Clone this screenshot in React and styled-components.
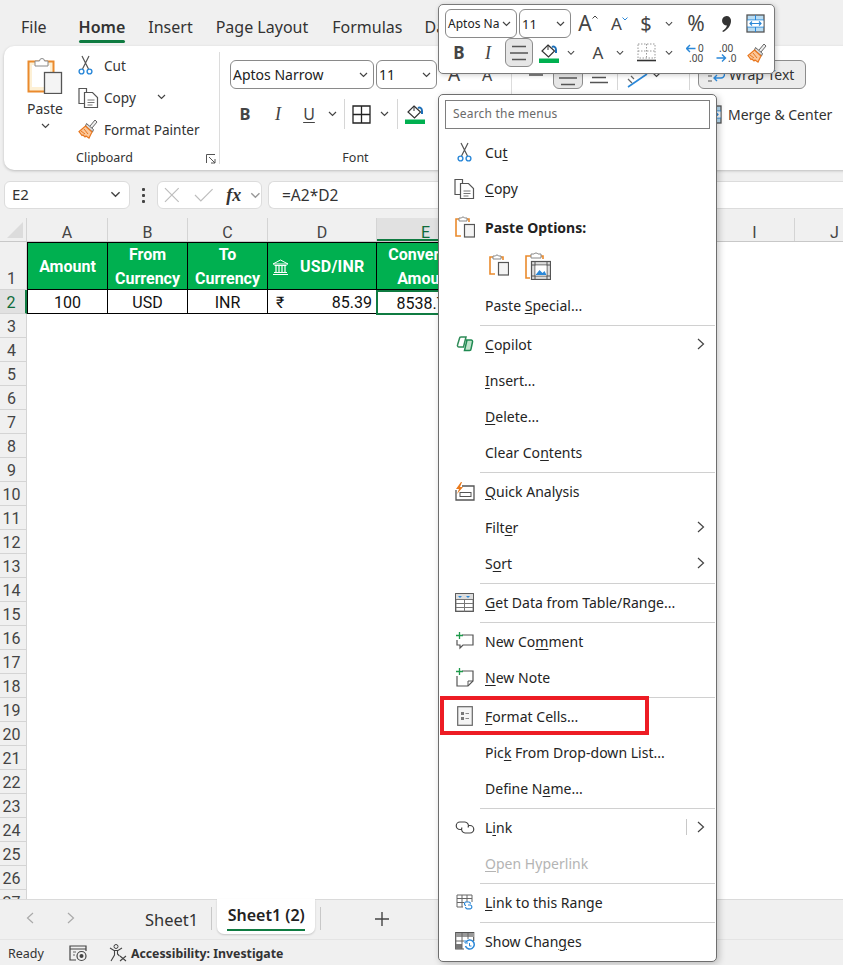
import React from "react";
import styled, { createGlobalStyle } from "styled-components";

const UI = `"Noto Sans", "Open Sans", sans-serif`;
const CELL = `Roboto, "Liberation Sans", sans-serif`;

const GlobalStyle = createGlobalStyle`
  html, body { margin: 0; padding: 0; background: #f0f0f0; }
  body { font-family: ${UI}; color: #242424; }
  u { text-underline-offset: 2px; text-decoration-thickness: 1px; }
`;

const Page = styled.div`
  position: relative;
  width: 843px;
  height: 965px;
  overflow: hidden;
  display: flex;
  flex-direction: column;
  background: #f0f0f0;
`;

/* ---------- tabs ---------- */
const TabBar = styled.div`
  height: 46px;
  flex: none;
  display: flex;
  padding-left: 21px;
  box-sizing: border-box;
`;
const Tab = styled.div`
  position: relative;
  margin-left: ${(p) => p.$ml}px;
  padding-top: 16px;
  font-size: 16px;
  line-height: 22px;
  font-weight: ${(p) => (p.$active ? 600 : 400)};
  color: #333;
  &::after {
    content: "";
    display: ${(p) => (p.$active ? "block" : "none")};
    position: absolute;
    left: 0;
    right: 0;
    top: 40px;
    height: 2.5px;
    border-radius: 2px;
    background: #0f7b41;
  }
`;

/* ---------- ribbon ---------- */
const Ribbon = styled.div`
  height: 124px;
  flex: none;
  width: 900px;
  margin-left: 4px;
  display: flex;
  background: #fff;
  border-radius: 10px;
  box-shadow: 0 1px 3px rgba(0, 0, 0, 0.22);
`;
const RibbonGroup = styled.div`
  position: relative;
  flex: none;
  width: ${(p) => p.$w}px;
  height: 112px;
  margin-top: 6px;
  box-sizing: border-box;
  border-right: ${(p) => (p.$last ? "none" : "1px solid #dcdcdc")};
`;
const GroupBody = styled.div`
  display: flex;
  gap: ${(p) => p.$gap || 0}px;
  padding: ${(p) => p.$pad || "0"};
`;
const GroupLabel = styled.div`
  position: absolute;
  left: 0;
  right: ${(p) => p.$pr}px;
  top: 97px;
  text-align: center;
  font-size: 12.5px;
  line-height: 18px;
  color: #333;
`;
const Launcher = styled.svg`
  position: absolute;
  right: 3px;
  bottom: 0;
`;
const PasteColumn = styled.div`
  width: 40px;
  display: flex;
  flex-direction: column;
  align-items: center;
  font-size: 14px;
  line-height: 18px;
  color: #333;
`;
const PasteLabel = styled.div`
  margin-top: 6px;
`;
const PasteChevron = styled.div`
  margin-top: 5px;
  line-height: 0;
`;
const ClipboardList = styled.div`
  display: flex;
  flex-direction: column;
  margin-top: -1px;
  gap: 12px;
`;
const ClipboardRow = styled.div`
  height: 20px;
  display: flex;
  align-items: center;
  font-size: 13.6px;
  color: #333;
  white-space: nowrap;
`;
const ClipIconSlot = styled.div`
  width: 26px;
  display: flex;
  justify-content: flex-start;
  line-height: 0;
`;
const RibbonRow = styled.div`
  display: flex;
  align-items: center;
  height: ${(p) => p.$h}px;
  margin-top: ${(p) => p.$mt || 0}px;
  margin-left: ${(p) => p.$ml || 0}px;
`;
const Combo = styled.div`
  flex: none;
  width: ${(p) => p.$w}px;
  height: 29px;
  margin-left: ${(p) => p.$ml || 0}px;
  box-sizing: border-box;
  border: 1px solid #8a8a8a;
  border-radius: 6px;
  background: #fff;
  display: flex;
  align-items: center;
  justify-content: space-between;
  padding: 0 5px 0 2px;
  font-family: ${UI};
  font-size: ${(p) => p.$size || 14}px;
  color: #222;
  overflow: hidden;
  white-space: nowrap;
`;
const Tool = styled.div`
  flex: none;
  width: ${(p) => p.$w}px;
  margin-left: ${(p) => p.$ml || 0}px;
  padding-top: ${(p) => p.$pt || 0}px;
  display: flex;
  align-items: center;
  justify-content: center;
  line-height: 1;
  color: #444;
  font-family: ${(p) => (p.$serif ? `"Liberation Serif", serif` : UI)};
  font-size: ${(p) => p.$size || 14}px;
  font-weight: ${(p) => (p.$bold ? 700 : 400)};
  font-style: ${(p) => (p.$italic ? "italic" : "normal")};
`;
const ActiveTool = styled.div`
  flex: none;
  width: ${(p) => p.$w}px;
  height: 29px;
  margin-left: ${(p) => p.$ml || 0}px;
  padding-top: ${(p) => p.$pt || 0}px;
  box-sizing: border-box;
  border: 1px solid #8c8c8c;
  border-radius: 6px;
  background: #e6e6e6;
  display: flex;
  align-items: center;
  justify-content: center;
`;
const Divider = styled.div`
  flex: none;
  width: 1px;
  height: 30px;
  margin-left: ${(p) => p.$ml || 0}px;
  background: #d6d6d6;
`;
const WrapButton = styled.div`
  flex: none;
  width: 108px;
  height: 29px;
  margin-left: 8px;
  box-sizing: border-box;
  border: 1px solid #8c8c8c;
  border-radius: 6px;
  background: #ececec;
  display: flex;
  align-items: center;
  gap: 4px;
  padding-left: 8px;
  font-size: 14px;
  color: #333;
`;
const MergeLabel = styled.div`
  font-size: 14px;
  color: #333;
  margin-left: 6px;
  white-space: nowrap;
`;

/* ---------- formula bar ---------- */
const FormulaBar = styled.div`
  height: 48px;
  flex: none;
  box-sizing: border-box;
  padding: 11px 0 9px 4px;
  display: flex;
  align-items: stretch;
`;
const NameBox = styled.div`
  width: 126px;
  box-sizing: border-box;
  background: #fff;
  border: 1px solid #dcdcdc;
  border-radius: 6px;
  display: flex;
  align-items: center;
  justify-content: space-between;
  padding: 0 8px 2px 7px;
  font-size: 15px;
  color: #333;
`;
const Dots = styled.div`
  width: 27px;
  display: flex;
  flex-direction: column;
  align-items: center;
  justify-content: center;
  gap: 3px;
  & > i {
    width: 3px;
    height: 3px;
    background: #444;
    border-radius: 1px;
  }
`;
const FxBox = styled.div`
  width: 105px;
  box-sizing: border-box;
  background: #fff;
  border: 1px solid #dcdcdc;
  border-radius: 6px;
  display: flex;
  align-items: center;
  padding-left: 6px;
  gap: 14px;
`;
const FxGlyph = styled.span`
  font-family: "Liberation Serif", serif;
  font-style: italic;
  font-weight: 700;
  font-size: 18px;
  color: #333;
  margin-left: -1px;
  margin-right: -5px;
`;
const FormulaInput = styled.div`
  flex: 1;
  margin-left: 6px;
  background: #fff;
  border: 1px solid #dcdcdc;
  border-right: none;
  border-radius: 6px 0 0 6px;
  display: flex;
  align-items: center;
  padding: 0 0 1px 13px;
  font-size: 15.5px;
  color: #333;
`;

/* ---------- sheet ---------- */
const ColumnHeaders = styled.div`
  height: 23px;
  flex: none;
  display: flex;
  background: #f0f0f0;
  border-bottom: 1px solid #c8c8c8;
  box-sizing: content-box;
`;
const Corner = styled.div`
  width: 27px;
  flex: none;
  position: relative;
  box-sizing: border-box;
  border-right: 1px solid #d4d4d4;
  &::after {
    content: "";
    position: absolute;
    right: 3px;
    bottom: 3px;
    border-style: solid;
    border-width: 0 0 16px 16px;
    border-color: transparent transparent #dcdcdc transparent;
  }
`;
const ColumnHead = styled.div`
  flex: none;
  width: ${(p) => p.$w}px;
  box-sizing: border-box;
  border-right: 1px solid #d4d4d4;
  background: ${(p) => (p.$sel ? "#e1e1e1" : "transparent")};
  box-shadow: ${(p) => (p.$sel ? "inset 0 -2px 0 #0f7b41" : "none")};
  text-align: center;
  font-family: ${CELL};
  font-size: 16px;
  line-height: 29px;
  color: ${(p) => (p.$sel ? "#0f6b3a" : "#444")};
`;
const SheetBody = styled.div`
  flex: 1;
  min-height: 0;
  overflow: hidden;
  background: #fff;
`;
const SheetRow = styled.div`
  display: flex;
  height: ${(p) => p.$h}px;
`;
const RowHead = styled.div`
  flex: none;
  width: 27px;
  box-sizing: border-box;
  padding-right: 3px;
  display: flex;
  align-items: flex-end;
  justify-content: center;
  font-family: ${CELL};
  font-size: 16px;
  line-height: 21px;
  background: ${(p) => (p.$sel ? "#e1e1e1" : "#f0f0f0")};
  color: ${(p) => (p.$sel ? "#0f6b3a" : "#444")};
  border-bottom: 1px solid #d4d4d4;
  border-right: ${(p) => (p.$sel ? "2px solid #0f7b41" : "1px solid #d4d4d4")};
`;
const HeadCell = styled.div`
  flex: none;
  width: ${(p) => p.$w}px;
  box-sizing: border-box;
  background: #00b050;
  color: #fff;
  border: 1px solid #000;
  border-left-width: ${(p) => (p.$first ? 1 : 0)}px;
  display: flex;
  align-items: center;
  justify-content: ${(p) => (p.$spread ? "flex-start" : "center")};
  text-align: center;
  font-family: ${CELL};
  font-weight: 700;
  font-size: 16px;
  line-height: 24px;
  padding: 2px 0 0 ${(p) => (p.$spread ? 4 : 0)}px;
  white-space: pre-line;
`;
const DeskLabel = styled.span`
  margin-left: 11px;
  letter-spacing: 0.2px;
`;
const DataCell = styled.div`
  flex: none;
  width: ${(p) => p.$w}px;
  box-sizing: border-box;
  background: #fff;
  border-right: 1px solid #000;
  border-bottom: 1px solid #000;
  border-left: ${(p) => (p.$first ? "1px solid #000" : "none")};
  display: flex;
  align-items: center;
  justify-content: ${(p) => (p.$between ? "space-between" : "center")};
  padding: ${(p) => (p.$between ? "1px 4px 0 8px" : "1px 0 0")};
  font-family: ${CELL};
  font-size: 16px;
  color: #111;
`;
const SelectedCell = styled(DataCell)`
  border: 2px solid #0f7b41;
  position: relative;
  left: -1px;
  height: 25px;
  width: ${(p) => p.$w + 1}px;
`;

/* ---------- sheet tabs and status ---------- */
const SheetTabs = styled.div`
  height: 40px;
  flex: none;
  box-sizing: border-box;
  display: flex;
  align-items: flex-start;
  background: #f0f0f0;
  border-top: 1px solid #dadada;
`;
const NavArrow = styled.div`
  margin-left: ${(p) => p.$ml}px;
  margin-top: 12px;
  line-height: 0;
`;
const SheetName = styled.div`
  margin-left: 70px;
  padding-top: 8px;
  font-size: 16.5px;
  line-height: 24px;
  color: #333;
`;
const TabDivider = styled.div`
  width: 1px;
  height: 23px;
  margin: 7px 0 0 ${(p) => p.$ml}px;
  background: #c8c8c8;
`;
const ActiveSheet = styled.div`
  position: relative;
  width: 98px;
  height: 35px;
  margin: -1px 0 0 5px;
  box-sizing: border-box;
  padding-top: 4px;
  text-align: center;
  background: #fff;
  border-radius: 0 0 7px 7px;
  box-shadow: 0 1px 2px rgba(0, 0, 0, 0.18);
  font-size: 16px;
  font-weight: 600;
  line-height: 24px;
  color: #222;
  &::after {
    content: "";
    position: absolute;
    left: 10px;
    right: 10px;
    bottom: 3px;
    height: 2px;
    background: #0f7b41;
  }
`;
const AddSheet = styled.div`
  margin: 12px 0 0 54px;
  line-height: 0;
`;
const StatusBar = styled.div`
  height: 26px;
  flex: none;
  box-sizing: border-box;
  display: flex;
  align-items: center;
  padding: 1px 0 0 8px;
  background: #f0f0f0;
  border-top: 1px solid #e4e4e4;
  font-size: 12.5px;
  color: #333;
`;
const StatusIcon = styled.div`
  margin-left: ${(p) => p.$ml}px;
  line-height: 0;
`;
const StatusStrong = styled.span`
  margin-left: 3px;
  font-weight: 700;
  font-size: 12.3px;
`;

/* ---------- floating toolbar ---------- */
const MiniToolbar = styled.div`
  position: absolute;
  left: 438px;
  top: 4px;
  width: 337px;
  height: 70px;
  box-sizing: border-box;
  padding: 4px 0 0 6px;
  background: #fff;
  border: 1px solid #7a7a7a;
  border-radius: 5px;
  box-shadow: 1px 1px 5px rgba(0, 0, 0, 0.2);
`;
const MiniRow = styled.div`
  display: flex;
  align-items: center;
  height: 29px;
`;
const GrowCaret = styled.span`
  position: relative;
  display: inline-block;
  line-height: 1;
  margin-right: ${(p) => p.$mr || 0}px;
`;
const CaretMark = styled.svg`
  position: absolute;
  right: -6px;
  top: 2px;
`;

/* ---------- context menu ---------- */
const Menu = styled.div`
  position: absolute;
  left: 438px;
  top: 94px;
  width: 279px;
  height: 868px;
  box-sizing: border-box;
  background: #fff;
  border: 1px solid #6e6e6e;
  border-radius: 5px;
  box-shadow: 2px 2px 7px rgba(0, 0, 0, 0.22);
`;
const SearchBox = styled.div`
  height: 29px;
  margin: 5px 6px 6px 6px;
  box-sizing: border-box;
  border: 1px solid #7e7e7e;
  padding: 0 0 2px 7px;
  display: flex;
  align-items: center;
  font-size: 12px;
  letter-spacing: 0.2px;
  color: #6a6a6a;
`;
const MenuRow = styled.div`
  position: relative;
  height: 36px;
  box-sizing: border-box;
  padding-bottom: 2px;
  display: flex;
  align-items: center;
  font-size: 14px;
  letter-spacing: 0.02px;
  color: ${(p) => (p.$disabled ? "#b4b4b4" : "#242424")};
`;
const MenuIconSlot = styled.div`
  flex: none;
  width: 46px;
  box-sizing: border-box;
  padding-left: 5px;
  display: flex;
  justify-content: center;
  line-height: 0;
`;
const MenuArrow = styled.div`
  margin-left: auto;
  margin-right: 11px;
  line-height: 0;
  display: flex;
  align-items: center;
`;
const ArrowDivider = styled.div`
  width: 1px;
  height: 16px;
  margin-right: 10px;
  background: #c8c8c8;
`;
const MenuSep = styled.div`
  height: 1px;
  margin: 1px 1px 1px 41px;
  background: #d0d0d0;
`;
const PasteHeader = styled.div`
  height: 42px;
  box-sizing: border-box;
  padding-bottom: 2px;
  display: flex;
  align-items: center;
  font-size: 14px;
  font-weight: 700;
  color: #222;
`;
const PasteChoices = styled.div`
  height: 39px;
  display: flex;
  padding: 0 0 7px 50px;
  box-sizing: border-box;
  align-items: center;
  gap: 16px;
  line-height: 0;
`;
const Highlight = styled.div`
  position: absolute;
  left: 1px;
  top: -3px;
  width: 209px;
  height: 39px;
  box-sizing: border-box;
  border: 4.5px solid #ed1c24;
  pointer-events: none;
`;

/* ---------- drawings ---------- */
const Chevron = ({ w = 9, h = 6, c = "#444" }) => (
  <svg width={w} height={h} viewBox="0 0 9 6" fill="none">
    <path d="M1 1l3.5 3.5L8 1" stroke={c} strokeWidth="1.2" />
  </svg>
);
const ChevronRight = ({ c = "#444", h = 12 }) => (
  <svg width="8" height={h} viewBox="0 0 8 12" fill="none">
    <path d="M1 1l5.5 5L1 11" stroke={c} strokeWidth="1.2" />
  </svg>
);
const ChevronLeft = ({ c = "#aaa" }) => (
  <svg width="8" height="12" viewBox="0 0 8 12" fill="none">
    <path d="M7 1L1.5 6L7 11" stroke={c} strokeWidth="1.2" />
  </svg>
);
const PasteBig = () => (
  <svg width="36" height="38" viewBox="0 0 36 38" fill="none">
    <rect x="1.5" y="5.5" width="25" height="30" fill="#fdf0d5" stroke="#ea8a2c" strokeWidth="2" />
    <rect x="5" y="9" width="18" height="22" fill="#fff" />
    <path d="M8 10V5h4.5a2.5 2.5 0 0 1 5 0H21v5z" fill="#fff" stroke="#8a8a8a" />
    <rect x="17.5" y="16.5" width="17" height="21" fill="#f4f4f4" stroke="#555" strokeWidth="1.3" />
  </svg>
);
const Scissors = () => (
  <svg width="15" height="20" viewBox="0 0 15 20" fill="none">
    <path d="M4 1l6.5 13M11 1L4.5 14" stroke="#555" strokeWidth="1.2" />
    <circle cx="3.5" cy="16.5" r="2.4" stroke="#2b88d8" strokeWidth="1.4" />
    <circle cx="11.5" cy="16.5" r="2.4" stroke="#2b88d8" strokeWidth="1.4" />
  </svg>
);
const CopyIcon = () => (
  <svg width="21" height="21" viewBox="0 0 21 21" fill="none">
    <path d="M6 16.5H1V1.5h7.5V5" stroke="#555" strokeWidth="1.2" />
    <path d="M6.5 5.5h8l5 5v10h-13z" fill="#fff" stroke="#555" strokeWidth="1.2" />
    <path d="M9.5 13h7M9.5 15.5h7M9.5 18h5" stroke="#777" />
  </svg>
);
const Painter = () => (
  <svg width="20" height="20" viewBox="0 0 20 20" fill="none">
    <path d="M12 7l5-6 2 2-5 6" fill="#eee" stroke="#666" />
    <path d="M8.5 4.5l7 6-1 2.5-7-6z" fill="#ddd" stroke="#666" />
    <path d="M7.5 7l6.5 6-3 6-3-2-1 1-2-2-1 .5L1 12.5z" fill="#fbc79a" stroke="#e8771f" strokeWidth="1.2" />
    <path d="M3 12l4 3M6 10l4 5" stroke="#e8771f" />
  </svg>
);
const Bucket = () => (
  <svg width="20" height="20" viewBox="0 0 20 20" fill="none">
    <path d="M9 2l6.5 6-6 6L3 8z" fill="#fff" stroke="#333" strokeWidth="1.2" />
    <path d="M9 2v5" stroke="#333" />
    <path d="M13 4c2-1 4 0 4 3v3" stroke="#1c6fb8" strokeWidth="2" />
    <rect x="0" y="15.5" width="20" height="4.5" fill="#00b050" />
  </svg>
);
const BorderGrid = ({ dotted }) => (
  <svg width="19" height="19" viewBox="0 0 19 19" fill="none">
    {dotted ? (
      <>
        <rect x="1" y="1" width="17" height="14" stroke="#999" strokeDasharray="1.5 1.5" />
        <path d="M9.5 1v14M1 8h17" stroke="#999" strokeDasharray="1.5 1.5" />
        <path d="M0 17.5h19" stroke="#333" strokeWidth="1.6" />
      </>
    ) : (
      <path d="M1 1h17v17H1zM9.5 1v17M1 9.5h17" stroke="#222" strokeWidth="1.3" />
    )}
  </svg>
);
const AlignLines = ({ top, mid, bottom }) => (
  <svg width="20" height="16" viewBox="0 0 20 16" fill="none">
    {top && <path d="M1 1.5h18M3 6h14" stroke="#555" strokeWidth="1.4" />}
    {mid && <path d="M3 1.5h14M1 8h18M3 14.5h14" stroke="#555" strokeWidth="1.4" />}
    {bottom && <path d="M3 9.5h14M1 14.5h18" stroke="#555" strokeWidth="1.4" />}
  </svg>
);
const OrientIcon = () => (
  <svg width="24" height="16" viewBox="0 0 24 16" fill="none">
    <path d="M3 15L22 2" stroke="#2b88d8" strokeWidth="1.6" />
    <path d="M3 7l4 4M6 4l3 3" stroke="#666" strokeWidth="1.2" />
  </svg>
);
const MergeIcon = () => (
  <svg width="19" height="19" viewBox="0 0 19 19" fill="none">
    <rect x="1" y="1" width="17" height="17" fill="#b9ddf4" stroke="#555" strokeWidth="1.3" />
    <path d="M9.5 1v5M9.5 13v5" stroke="#2b88d8" />
    <path d="M1 6h17M1 13h17" stroke="#2b88d8" />
    <rect x="1.6" y="6.5" width="15.8" height="6" fill="#fff" />
    <path d="M4 9.5h11M6 7.5l-2 2 2 2M13 7.5l2 2-2 2" stroke="#2b88d8" strokeWidth="1.2" />
  </svg>
);
const CommaIcon = () => (
  <svg width="12" height="18" viewBox="0 0 12 18" fill="none">
    <path d="M6.5 1A4.5 4.5 0 0 1 11 6c0 4.5-3.5 9-8 11l-.7-1c2.5-1.6 4.200-3.600 4.700-5.600A4.500 4.500 0 0 1 6.500 1z" fill="#333" />
  </svg>
);
const DecimalLeft = () => (
  <svg width="21" height="20" viewBox="0 0 21 20" fill="none">
    <path d="M.5 5.500h9M4 2L.5 5.500 4 9" stroke="#2b88d8" strokeWidth="1.4" />
    <text x="12" y="9" fontSize="10" fill="#444" fontFamily="Noto Sans">0</text>
    <text x="3" y="19" fontSize="10" fill="#444" fontFamily="Noto Sans">.00</text>
  </svg>
);
const DecimalRight = () => (
  <svg width="21" height="20" viewBox="0 0 21 20" fill="none">
    <text x="3" y="9" fontSize="10" fill="#444" fontFamily="Noto Sans">.00</text>
    <path d="M.5 15h9M6 11.500L9.500 15 6 18.500" stroke="#2b88d8" strokeWidth="1.4" />
    <text x="12" y="19" fontSize="10" fill="#444" fontFamily="Noto Sans">.0</text>
  </svg>
);
const Launch = () => (
  <Launcher width="10" height="10" viewBox="0 0 10 10" fill="none">
    <path d="M.5 9V.5H9M3 3l6 6M9 5v4H5" stroke="#555" />
  </Launcher>
);
const WrapIcon = () => (
  <svg width="18" height="16" viewBox="0 0 18 16" fill="none">
    <path d="M7 4H14a3 3 0 0 1 0 7H7M10 8L7 11l3 3" stroke="#2b88d8" strokeWidth="1.4" />
    <path d="M5 9H1M5 14H1" stroke="#555" />
  </svg>
);
const Bank = () => (
  <svg width="17" height="17" viewBox="0 0 17 17" fill="none">
    <path d="M8.500 1L16 5H1zM2.500 6.500h12M1 15.500h15M2 13.500h13" stroke="#fff" />
    <path d="M4 7v6M7 7v6M10 7v6M13 7v6" stroke="#fff" strokeWidth="1.2" />
  </svg>
);
const PasteSmall = () => (
  <svg width="20" height="24" viewBox="0 0 20 24" fill="none">
    <path d="M6 21H1V4h13v3" stroke="#ea8a2c" strokeWidth="1.6" />
    <path d="M4 6V3h2.500a1.600 1.600 0 0 1 3 0H12v3z" fill="#fff" stroke="#888" />
    <rect x="9.500" y="9.500" width="10" height="12.500" fill="#f4f4f4" stroke="#555" strokeWidth="1.2" />
  </svg>
);
const PastePicture = () => (
  <svg width="26" height="29" viewBox="0 0 26 29" fill="none">
    <path d="M5 27H1V5h17v3" stroke="#ea8a2c" strokeWidth="1.6" />
    <path d="M6 7V3h3a2.500 2.500 0 0 1 4 0h3v4z" fill="#fff" stroke="#888" />
    <rect x="6.500" y="10.500" width="19" height="18" fill="#ddd" stroke="#555" strokeWidth="1.2" />
    <path d="M10 10.500v18M22 10.500v18M6.500 14h19M6.500 25h19" stroke="#555" />
    <rect x="10.500" y="14.500" width="11" height="10" fill="#fff" />
    <path d="M10.500 24l4-5 3 3 2-2 2 4z" fill="#2b88d8" />
  </svg>
);
const Copilot = () => (
  <svg width="18" height="16" viewBox="0 0 18 16" fill="none">
    <path d="M5 1h5L7.500 11H3a1.500 1.500 0 0 1-1.500-2l2-6.500A1.500 1.500 0 0 1 5 1z" stroke="#2e8b57" strokeWidth="1.5" />
    <path d="M10 4h5a1.500 1.500 0 0 1 1.500 2L15 13a1.500 1.500 0 0 1-1.500 1.500h-5L11 4z" fill="#bfe3cb" stroke="#1f8a52" strokeWidth="1.5" />
  </svg>
);
const QuickAnalysis = () => (
  <svg width="20" height="19" viewBox="0 0 20 19" fill="none">
    <path d="M7 4h12v14H1V8" stroke="#555" strokeWidth="1.3" />
    <rect x="5" y="10.500" width="11" height="4" stroke="#555" />
    <path d="M6 0L1 7h3l-2 5 6-7H5l2-5z" fill="#ea7a1c" />
  </svg>
);
const GetData = () => (
  <svg width="19" height="19" viewBox="0 0 19 19" fill="none">
    <rect x=".7" y=".7" width="17.600" height="17.600" fill="#fff" stroke="#555" strokeWidth="1.3" />
    <rect x="1" y="1" width="17" height="5" fill="#ddd" />
    <path d="M3 3h4L5 5zM11 3h4l-2 2z" fill="#2b88d8" />
    <path d="M1 6.500h17M1 10.500h17M1 14.500h17M9.500 6.500v12" stroke="#777" />
  </svg>
);
const NewComment = () => (
  <svg width="19" height="18" viewBox="0 0 19 18" fill="none">
    <path d="M7 3h11v10H8l-3 3v-3H2V8" stroke="#555" strokeWidth="1.2" />
    <path d="M4.500 0v7M1 3.500h7" stroke="#1f9a4b" strokeWidth="1.3" />
  </svg>
);
const NewNote = () => (
  <svg width="19" height="19" viewBox="0 0 19 19" fill="none">
    <path d="M7 3h11v10l-5 5H2V8" stroke="#555" strokeWidth="1.2" />
    <path d="M18 13h-5v5" stroke="#555" />
    <path d="M4.500 0v7M1 3.500h7" stroke="#1f9a4b" strokeWidth="1.3" />
  </svg>
);
const FormatCells = () => (
  <svg width="16" height="20" viewBox="0 0 16 20" fill="none">
    <rect x=".7" y=".7" width="14.600" height="18.600" fill="#f4f4f4" stroke="#666" strokeWidth="1.2" />
    <rect x="4" y="6" width="3" height="3" fill="#777" />
    <rect x="4" y="11" width="3" height="3" fill="#777" />
    <path d="M8.500 7.500h3.500M8.500 12.500h3.500" stroke="#888" />
  </svg>
);
const LinkIcon = () => (
  <svg width="20" height="13" viewBox="0 0 20 13" fill="none">
    <path d="M7 8.500H5A3.700 3.700 0 0 1 5 1h5a3.700 3.700 0 0 1 3 5.500" stroke="#444" strokeWidth="1.2" />
    <path d="M13 4.500h2a3.700 3.700 0 0 1 0 7.500h-5a3.700 3.700 0 0 1-3-5.500" stroke="#444" strokeWidth="1.2" />
  </svg>
);
const LinkRange = () => (
  <svg width="17" height="16" viewBox="0 0 17 16" fill="none">
    <path d="M7 13H1V1h15v7M1 4.500h15M1 8.500h7M6 1v12M11 1v7" stroke="#666" />
    <path d="M10 11.500h-.5a2 2 0 0 1 0-3.500H13a2 2 0 0 1 1.500 1.800M12 11h2.500a2 2 0 0 1 0 3.800H11a2 2 0 0 1-1.500-1.800" stroke="#2b88d8" strokeWidth="1.2" />
  </svg>
);
const ShowChanges = () => (
  <svg width="20" height="19" viewBox="0 0 20 19" fill="none">
    <path d="M9 17H.7V.7h18V9" stroke="#555" strokeWidth="1.2" />
    <rect x="1" y="1" width="18" height="4" fill="#999" />
    <rect x="1" y="12" width="6" height="5" fill="#777" />
    <path d="M1 9h8M7 1v16M13 1v6" stroke="#666" />
    <path d="M11 10a4.500 4.500 0 1 1-.5 4" stroke="#2b88d8" strokeWidth="1.5" />
    <path d="M10 8v3h3M14.500 11v3h2" stroke="#2b88d8" />
  </svg>
);
const CloseX = () => (
  <svg width="16" height="16" viewBox="0 0 16 16" fill="none">
    <path d="M1 1l14 14M15 1L1 15" stroke="#bdbdbd" strokeWidth="1.2" />
  </svg>
);
const CheckMark = () => (
  <svg width="20" height="15" viewBox="0 0 20 15" fill="none">
    <path d="M1 7l6 6L19 1" stroke="#bdbdbd" strokeWidth="1.2" />
  </svg>
);
const PlusIcon = () => (
  <svg width="14" height="14" viewBox="0 0 14 14" fill="none">
    <path d="M7 0v14M0 7h14" stroke="#444" strokeWidth="1.4" />
  </svg>
);
const MacroIcon = () => (
  <svg width="18" height="17" viewBox="0 0 18 17" fill="none">
    <path d="M7 15H1V1h16v5M1 4h16" stroke="#444" strokeWidth="1.2" />
    <path d="M4 7h3M4 10h2" stroke="#666" />
    <circle cx="12.500" cy="11" r="4.500" stroke="#444" strokeWidth="1.2" />
    <circle cx="12.500" cy="11" r="2" fill="#444" />
  </svg>
);
const AccessIcon = () => (
  <svg width="19" height="18" viewBox="0 0 19 18" fill="none">
    <circle cx="7" cy="2.500" r="2" stroke="#444" />
    <path d="M1 4l4 2.500h4L13 4M5.500 7v4L2 17M8.500 7v3l2 2" stroke="#444" strokeWidth="1.1" />
    <path d="M11 12l6 5M17 12l-6 5" stroke="#444" strokeWidth="1.1" />
  </svg>
);

/* ---------- data ---------- */
const columns = [
  { id: "A", w: 81 },
  { id: "B", w: 80 },
  { id: "C", w: 80 },
  { id: "D", w: 109 },
  { id: "E", w: 98, sel: true },
  { id: "F", w: 80 },
  { id: "G", w: 80 },
  { id: "H", w: 80 },
  { id: "I", w: 80 },
  { id: "J", w: 80 },
];
const emptyRows = Array.from({ length: 25 }, (_, i) => i + 3);

const tabs = [
  { label: "File", ml: 0 },
  { label: "Home", ml: 32, active: true },
  { label: "Insert", ml: 23 },
  { label: "Page Layout", ml: 23 },
  { label: "Formulas", ml: 24 },
  { label: "Data", ml: 22 },
];

function Item({ icon, arrow, linkArrow, disabled, children, highlight }) {
  return (
    <MenuRow $disabled={disabled}>
      <MenuIconSlot>{icon}</MenuIconSlot>
      <span>{children}</span>
      {arrow && (
        <MenuArrow>
          {linkArrow && <ArrowDivider />}
          <ChevronRight />
        </MenuArrow>
      )}
      {highlight && <Highlight />}
    </MenuRow>
  );
}

export default function App() {
  return (
    <Page>
      <GlobalStyle />
      <TabBar>
        {tabs.map((t) => (
          <Tab key={t.label} $ml={t.ml} $active={t.active}>
            {t.label}
          </Tab>
        ))}
      </TabBar>

      <Ribbon>
        <RibbonGroup $w={216}>
          <GroupBody $pad="4px 0 0 21px" $gap={13}>
            <PasteColumn>
              <PasteBig />
              <PasteLabel>Paste</PasteLabel>
              <PasteChevron>
                <Chevron />
              </PasteChevron>
            </PasteColumn>
            <ClipboardList>
              <ClipboardRow>
                <ClipIconSlot>
                  <Scissors />
                </ClipIconSlot>
                Cut
              </ClipboardRow>
              <ClipboardRow>
                <ClipIconSlot>
                  <CopyIcon />
                </ClipIconSlot>
                Copy
                <Tool $w={9} $ml={21}>
                  <Chevron />
                </Tool>
              </ClipboardRow>
              <ClipboardRow>
                <ClipIconSlot>
                  <Painter />
                </ClipIconSlot>
                Format Painter
              </ClipboardRow>
            </ClipboardList>
          </GroupBody>
          <GroupLabel $pr={14}>Clipboard</GroupLabel>
          <Launch />
        </RibbonGroup>

        <RibbonGroup $w={292}>
          <RibbonRow $h={29} $mt={8} $ml={10}>
            <Combo $w={144} $size={14}>
              Aptos Narrow
              <Chevron />
            </Combo>
            <Combo $w={61} $ml={2} $size={14}>
              11
              <Chevron />
            </Combo>
            <Tool $w={18} $ml={8} $size={19}>
              A
            </Tool>
            <Tool $w={16} $ml={16} $size={16}>
              A
            </Tool>
          </RibbonRow>
          <RibbonRow $h={30} $mt={10} $ml={20}>
            <Tool $w={10} $bold $size={16.5}>
              B
            </Tool>
            <Tool $w={8} $ml={24} $italic $serif $size={18}>
              I
            </Tool>
            <Tool $w={12} $ml={21} $size={16}>
              <u>U</u>
            </Tool>
            <Tool $w={9} $ml={13}>
              <Chevron />
            </Tool>
            <Divider $ml={7} />
            <Tool $w={19} $ml={7}>
              <BorderGrid />
            </Tool>
            <Tool $w={9} $ml={9}>
              <Chevron />
            </Tool>
            <Divider $ml={8} />
            <Tool $w={20} $ml={7}>
              <Bucket />
            </Tool>
          </RibbonRow>
          <GroupLabel $pr={20}>Font</GroupLabel>
        </RibbonGroup>

        <RibbonGroup $w={400} $last>
          <RibbonRow $h={29} $mt={8} $ml={0}>
            <Tool $w={20} $ml={14} $pt={5}>
              <AlignLines top />
            </Tool>
            <ActiveTool $w={30} $ml={7} $pt={6}>
              <AlignLines mid />
            </ActiveTool>
            <Tool $w={20} $ml={6} $pt={2}>
              <AlignLines bottom />
            </Tool>
            <Divider $ml={8} />
            <Tool $w={30} $ml={4} $pt={10}>
              <OrientIcon />
            </Tool>
            <Tool $w={9}>
              <Chevron />
            </Tool>
            <Divider $ml={28} />
            <WrapButton>
              <WrapIcon />
              Wrap Text
            </WrapButton>
          </RibbonRow>
          <RibbonRow $h={30} $mt={10} $ml={191}>
            <MergeIcon />
            <MergeLabel>Merge &amp; Center</MergeLabel>
          </RibbonRow>
        </RibbonGroup>
      </Ribbon>

      <FormulaBar>
        <NameBox>
          E2
          <Chevron w={11} h={7} />
        </NameBox>
        <Dots>
          <i />
          <i />
          <i />
        </Dots>
        <FxBox>
          <CloseX />
          <CheckMark />
          <FxGlyph>fx</FxGlyph>
          <Chevron w={11} h={7} c="#999" />
        </FxBox>
        <FormulaInput>=A2*D2</FormulaInput>
      </FormulaBar>

      <ColumnHeaders>
        <Corner />
        {columns.map((c) => (
          <ColumnHead key={c.id} $w={c.w} $sel={c.sel}>
            {c.id}
          </ColumnHead>
        ))}
      </ColumnHeaders>

      <SheetBody>
        <SheetRow $h={48}>
          <RowHead>1</RowHead>
          <HeadCell $w={81} $first>
            Amount
          </HeadCell>
          <HeadCell $w={80}>{"From\nCurrency"}</HeadCell>
          <HeadCell $w={80}>{"To\nCurrency"}</HeadCell>
          <HeadCell $w={109} $spread>
            <Bank />
            <DeskLabel>USD/INR</DeskLabel>
          </HeadCell>
          <HeadCell $w={98}>{"Converted\nAmount"}</HeadCell>
        </SheetRow>
        <SheetRow $h={24}>
          <RowHead $sel>2</RowHead>
          <DataCell $w={81} $first>
            100
          </DataCell>
          <DataCell $w={80}>USD</DataCell>
          <DataCell $w={80}>INR</DataCell>
          <DataCell $w={109} $between>
            <span>₹</span>
            <span>85.39</span>
          </DataCell>
          <SelectedCell $w={98}>8538.70</SelectedCell>
        </SheetRow>
        {emptyRows.map((n) => (
          <SheetRow key={n} $h={24}>
            <RowHead>{n}</RowHead>
          </SheetRow>
        ))}
      </SheetBody>

      <SheetTabs>
        <NavArrow $ml={26}>
          <ChevronLeft />
        </NavArrow>
        <NavArrow $ml={33}>
          <ChevronRight c="#aaa" />
        </NavArrow>
        <SheetName>Sheet1</SheetName>
        <TabDivider $ml={13} />
        <ActiveSheet>Sheet1 (2)</ActiveSheet>
        <TabDivider $ml={5} />
        <AddSheet>
          <PlusIcon />
        </AddSheet>
      </SheetTabs>

      <StatusBar>
        Ready
        <StatusIcon $ml={25}>
          <MacroIcon />
        </StatusIcon>
        <StatusIcon $ml={22}>
          <AccessIcon />
        </StatusIcon>
        <StatusStrong>Accessibility: Investigate</StatusStrong>
      </StatusBar>

      <MiniToolbar>
        <MiniRow>
          <Combo $w={72} $size={12}>
            Aptos Na
            <Chevron />
          </Combo>
          <Combo $w={52} $ml={2} $size={13}>
            11
            <Chevron />
          </Combo>
          <Tool $w={20} $ml={7} $size={21}>
            <GrowCaret $mr={6}>
              A
              <CaretMark width="6" height="4" viewBox="0 0 6 4" fill="none">
                <path d="M.5 3.500L3 1l2.500 2.500" stroke="#444" />
              </CaretMark>
            </GrowCaret>
          </Tool>
          <Tool $w={18} $ml={12} $size={17}>
            <GrowCaret $mr={5}>
              A
              <CaretMark width="6" height="4" viewBox="0 0 6 4" fill="none">
                <path d="M.5 .5L3 3l2.500-2.500" stroke="#2b88d8" />
              </CaretMark>
            </GrowCaret>
          </Tool>
          <Tool $w={12} $ml={12} $size={20}>
            $
          </Tool>
          <Tool $w={8} $ml={13}>
            <Chevron w={8} />
          </Tool>
          <Tool $w={20} $ml={13} $size={21}>
            %
          </Tool>
          <Tool $w={14} $ml={13}>
            <CommaIcon />
          </Tool>
          <Tool $w={19} $ml={13}>
            <MergeIcon />
          </Tool>
        </MiniRow>
        <MiniRow>
          <Tool $w={10} $ml={9} $bold $size={17}>
            B
          </Tool>
          <Tool $w={10} $ml={19} $italic $serif $size={18}>
            I
          </Tool>
          <ActiveTool $w={28} $ml={12}>
            <AlignLines mid />
          </ActiveTool>
          <Tool $w={20} $ml={6}>
            <Bucket />
          </Tool>
          <Tool $w={8} $ml={8}>
            <Chevron w={8} />
          </Tool>
          <Tool $w={14} $ml={16} $size={17}>
            A
          </Tool>
          <Tool $w={8} $ml={11}>
            <Chevron w={8} />
          </Tool>
          <Tool $w={19} $ml={13}>
            <BorderGrid dotted />
          </Tool>
          <Tool $w={8} $ml={9}>
            <Chevron w={8} />
          </Tool>
          <Tool $w={21} $ml={13}>
            <DecimalLeft />
          </Tool>
          <Tool $w={21} $ml={9}>
            <DecimalRight />
          </Tool>
          <Tool $w={20} $ml={10}>
            <Painter />
          </Tool>
        </MiniRow>
      </MiniToolbar>

      <Menu>
        <SearchBox>Search the menus</SearchBox>
        <Item icon={<Scissors />}>
          Cu<u>t</u>
        </Item>
        <Item icon={<CopyIcon />}>
          <u>C</u>opy
        </Item>
        <PasteHeader>
          <MenuIconSlot>
            <PasteSmall />
          </MenuIconSlot>
          Paste Options:
        </PasteHeader>
        <PasteChoices>
          <PasteSmall />
          <PastePicture />
        </PasteChoices>
        <Item>
          Paste <u>S</u>pecial...
        </Item>
        <MenuSep />
        <Item icon={<Copilot />} arrow>
          <u>C</u>opilot
        </Item>
        <Item>
          <u>I</u>nsert...
        </Item>
        <Item>
          <u>D</u>elete...
        </Item>
        <Item>
          Clear Co<u>n</u>tents
        </Item>
        <MenuSep />
        <Item icon={<QuickAnalysis />}>
          <u>Q</u>uick Analysis
        </Item>
        <Item arrow>
          Filt<u>e</u>r
        </Item>
        <Item arrow>
          S<u>o</u>rt
        </Item>
        <MenuSep />
        <Item icon={<GetData />}>
          <u>G</u>et Data from Table/Range...
        </Item>
        <MenuSep />
        <Item icon={<NewComment />}>
          New Co<u>m</u>ment
        </Item>
        <Item icon={<NewNote />}>
          <u>N</u>ew Note
        </Item>
        <MenuSep />
        <Item icon={<FormatCells />} highlight>
          <u>F</u>ormat Cells...
        </Item>
        <Item>
          Pic<u>k</u> From Drop-down List...
        </Item>
        <Item>
          Define N<u>a</u>me...
        </Item>
        <MenuSep />
        <Item icon={<LinkIcon />} arrow linkArrow>
          L<u>i</u>nk
        </Item>
        <Item disabled>
          <u>O</u>pen Hyperlink
        </Item>
        <MenuSep />
        <Item icon={<LinkRange />}>
          <u>L</u>ink to this Range
        </Item>
        <MenuSep />
        <Item icon={<ShowChanges />}>
          Show Chan<u>g</u>es
        </Item>
      </Menu>
    </Page>
  );
}
